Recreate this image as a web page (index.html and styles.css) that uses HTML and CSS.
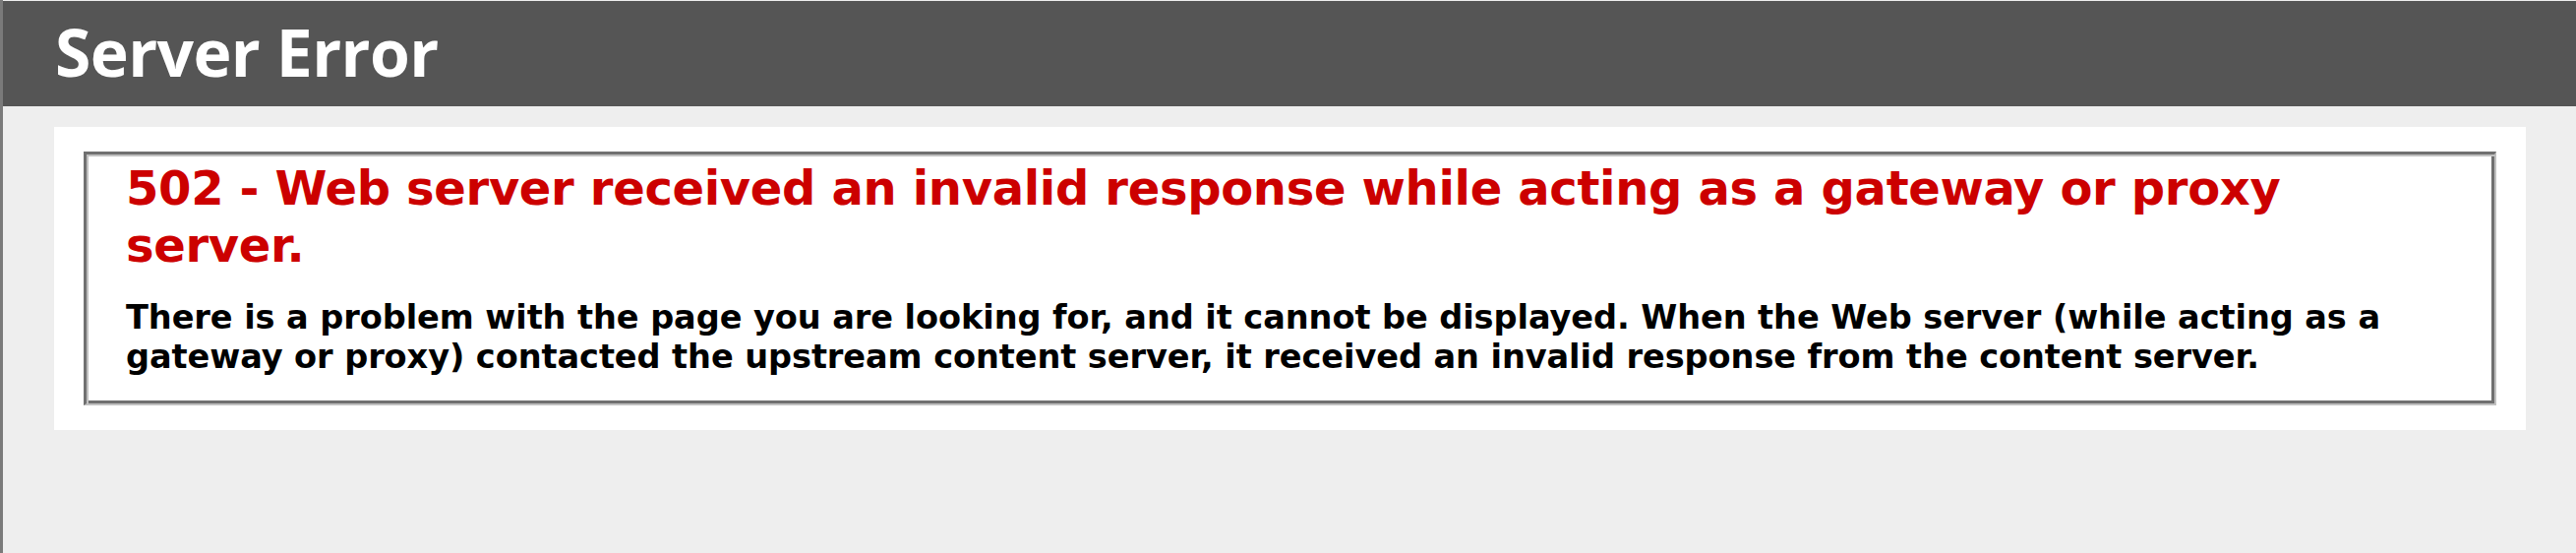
FILE: index.html
```
<!DOCTYPE html>
<html lang="en">
<head>
<meta charset="utf-8">
<title>502 - Web server received an invalid response while acting as a gateway or proxy server.</title>
<link rel="stylesheet" href="styles.css">
</head>
<body>
<div class="header"><h1 class="title">Server Error</h1></div>
<div class="content">
  <div class="content-container">
    <div class="fieldset">
      <h2 class="code">502 - Web server received an invalid response while acting as a gateway or proxy server.</h2>
      <h3 class="message">There is a problem with the page you are looking for, and it cannot be displayed. When the Web server (while acting as a gateway or proxy) contacted the upstream content server, it received an invalid response from the content server.</h3>
    </div>
  </div>
</div>
</body>
</html>
```
FILE: styles.css
```
html, body {
  height: 100%;
}
body {
  margin: 0;
  padding-top: 1px;
  box-sizing: border-box;
  border-left: 3px solid #7a7a7a;
  background: #eeeeee;
  font-family: "DejaVu Sans", Verdana, sans-serif;
}
.header {
  background: #555555;
  height: 107px;
  box-sizing: border-box;
  padding: 6px 52px 0 53px;
}
.title {
  margin: 0;
  font-family: "Open Sans", "Noto Sans", sans-serif;
  font-weight: 700;
  font-size: 66px;
  letter-spacing: -0.6px;
  line-height: 91px;
  color: #ffffff;
}
.content {
  margin: 0 0 0 52px;
  padding-top: 21px;
}
.content-container {
  background: #ffffff;
  width: 2513px;
  box-sizing: border-box;
  padding: 25px 30px;
}
.fieldset {
  border-style: solid;
  border-width: 3px 2px 2px 3px;
  border-color: #707070 #c0c0c0 #c0c0c0 #707070;
  box-shadow: inset 2px 2px 0 0 #c0c0c0, inset -3px -3px 0 0 #707070;
  padding: 5px 41px 27px 40px;
}
.code {
  margin: 0;
  font-size: 48px;
  font-weight: bold;
  letter-spacing: -0.33px;
  line-height: 58px;
  color: #cc0000;
}
.message {
  margin: 25px 0 0 0;
  font-size: 33.6px;
  font-weight: bold;
  letter-spacing: -0.08px;
  line-height: 40px;
  color: #000000;
}
```
